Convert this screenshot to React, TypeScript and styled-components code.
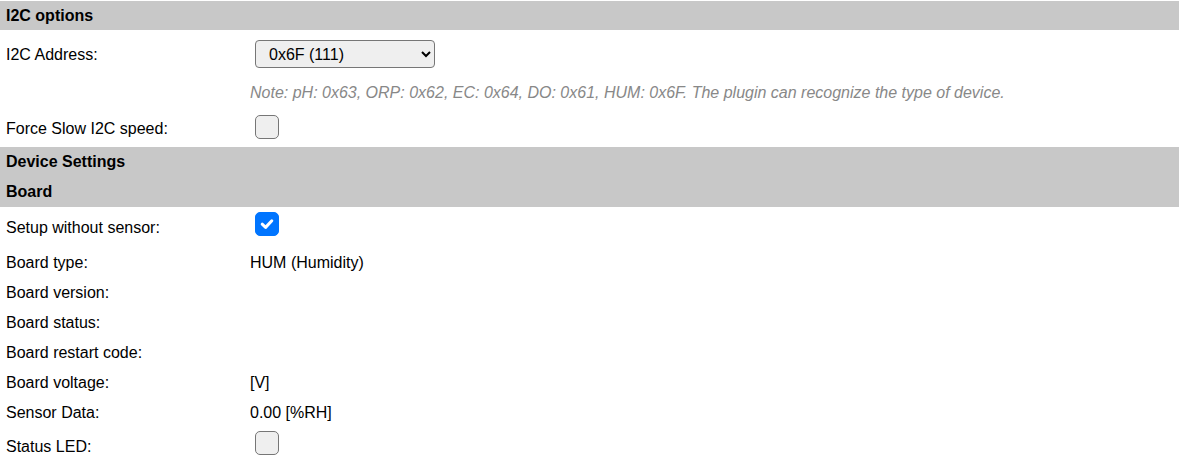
import React from "react";
import styled, { createGlobalStyle } from "styled-components";

const Global = createGlobalStyle`
  html, body { margin: 0; padding: 0; background: #fff; }
  body { font-family: "Liberation Sans", Arial, sans-serif; font-size: 16px; color: #000; }
`;

const Page = styled.div`
  padding-top: 1px;
  display: flex;
  flex-direction: column;
`;

const Header = styled.div<{ $h?: number }>`
  background: #c8c8c8;
  height: ${(p) => p.$h ?? 29}px;
  display: flex;
  align-items: center;
  padding-left: 6px;
  font-weight: bold;
  font-size: 16px;
`;

const Row = styled.div<{ $h: number }>`
  display: grid;
  grid-template-columns: 250px 1fr;
  align-items: center;
  height: ${(p) => p.$h}px;
`;

const Label = styled.div<{ $dy?: number }>`
  padding-left: 6px;
  line-height: 18px;
  transform: translateY(${(p) => p.$dy ?? 1}px);
`;

const Value = styled.div<{ $dy?: number }>`
  line-height: 18px;
  display: flex;
  align-items: center;
  transform: translateY(${(p) => p.$dy ?? 1}px);
`;

const Note = styled.div`
  font-style: italic;
  color: #888;
  line-height: 18px;
  transform: translateY(1px);
`;

const Select = styled.select`
  margin-left: 5px;
  width: 180px;
  height: 28px;
  font-family: "Liberation Sans", Arial, sans-serif;
  font-size: 16px;
  padding-left: 9px;
  border: 1px solid #767676;
  border-radius: 4px;
  background-color: #efefef;
  color: #000;
`;

const Box = styled.span<{ $checked?: boolean }>`
  margin-left: 5px;
  box-sizing: border-box;
  width: 24px;
  height: 24px;
  border-radius: 5px;
  border: 1px solid ${(p) => (p.$checked ? "#0075ff" : "#767676")};
  background: ${(p) => (p.$checked ? "#0075ff" : "#efefef")};
  display: inline-flex;
  align-items: center;
  justify-content: center;
`;

function CheckBox({ checked }: { checked?: boolean }) {
  return (
    <Box $checked={checked} role="checkbox" aria-checked={!!checked}>
      {checked && (
        <svg width="14" height="12" viewBox="0 0 14 12">
          <path d="M2.2 6.2 L5.6 9.4 L11.8 2.8" fill="none" stroke="#fff" strokeWidth="3" strokeLinecap="round" strokeLinejoin="round" />
        </svg>
      )}
    </Box>
  );
}

type R = { label: string; value?: React.ReactNode };

const boardRows: R[] = [
  { label: "Board type:", value: "HUM (Humidity)" },
  { label: "Board version:" },
  { label: "Board status:" },
  { label: "Board restart code:" },
  { label: "Board voltage:", value: "[V]" },
  { label: "Sensor Data:", value: "0.00 [%RH]" },
];

export default function App() {
  return (
    <Page>
      <Global />
      <Header>I2C options</Header>
      <Row $h={46}>
        <Label $dy={2}>I2C Address:</Label>
        <Value $dy={1}>
          <Select defaultValue="111">
            <option value="99">0x63 (99)</option>
            <option value="98">0x62 (98)</option>
            <option value="100">0x64 (100)</option>
            <option value="97">0x61 (97)</option>
            <option value="111">0x6F (111)</option>
          </Select>
        </Value>
      </Row>
      <Row $h={32}>
        <Label />
        <Note>Note: pH: 0x63, ORP: 0x62, EC: 0x64, DO: 0x61, HUM: 0x6F. The plugin can recognize the type of device.</Note>
      </Row>
      <Row $h={39}>
        <Label $dy={1}>Force Slow I2C speed:</Label>
        <Value $dy={-1}>
          <CheckBox />
        </Value>
      </Row>
      <Header $h={30}>Device Settings</Header>
      <Header $h={30}>Board</Header>
      <Row $h={40}>
        <Label $dy={1}>Setup without sensor:</Label>
        <Value $dy={-3}>
          <CheckBox checked />
        </Value>
      </Row>
      {boardRows.map((r) => (
        <Row key={r.label} $h={30}>
          <Label>{r.label}</Label>
          <Value>{r.value}</Value>
        </Row>
      ))}
      <Row $h={34}>
        <Label $dy={3}>Status LED:</Label>
        <Value $dy={-1}>
          <CheckBox />
        </Value>
      </Row>
    </Page>
  );
}
